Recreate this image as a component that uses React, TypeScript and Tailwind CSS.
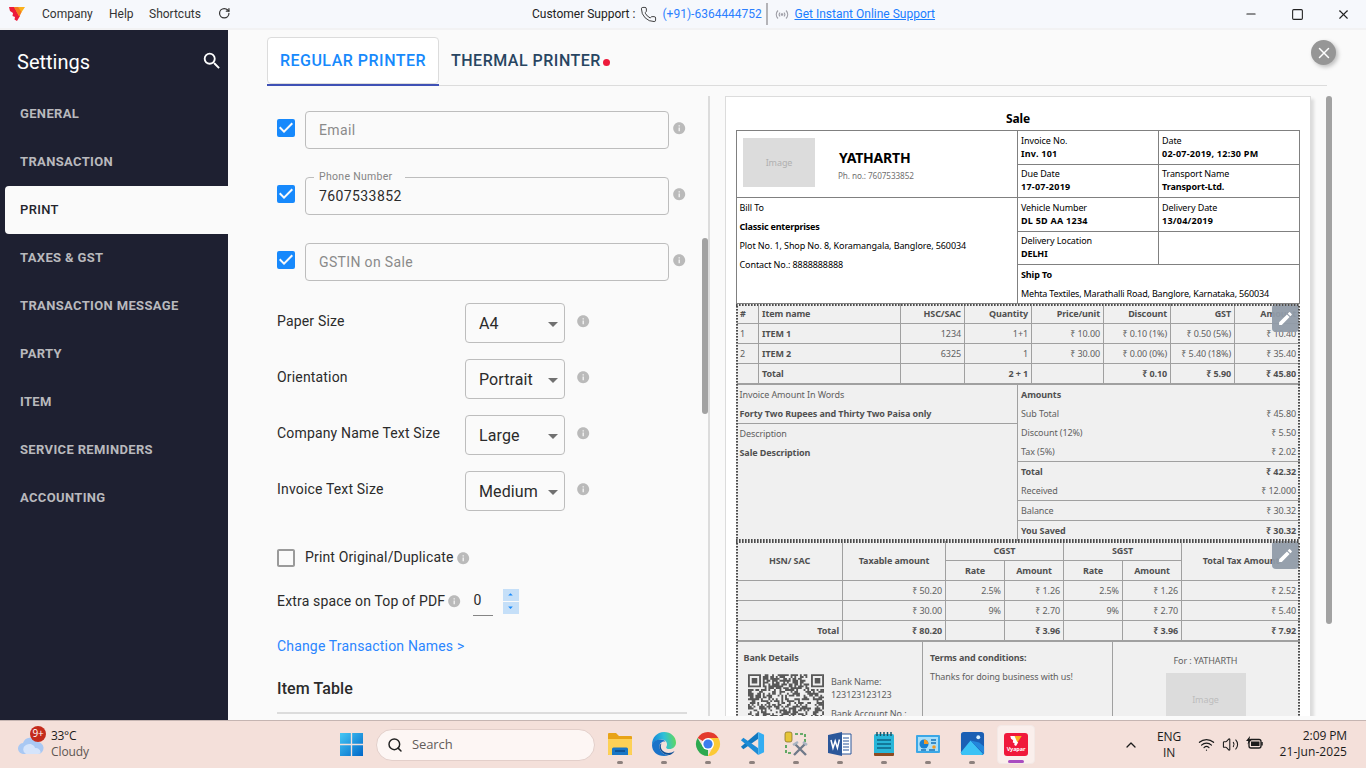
import React from "react";
import { MdInfo, MdSearch, MdEdit, MdCheckBox, MdCheckBoxOutlineBlank, MdArrowDropDown, MdArrowDropUp } from "react-icons/md";
import { RotateCw, Search, ChevronUp, X, Minus, Square, Phone, Volume2, Wifi } from "lucide-react";

const MENU = ["GENERAL", "TRANSACTION", "PRINT", "TAXES & GST", "TRANSACTION MESSAGE", "PARTY", "ITEM", "SERVICE REMINDERS", "ACCOUNTING"];

function VyaparMark({ className }: { className?: string }) {
  return (
    <svg viewBox="0 0 16 14" className={className}>
      <path d="M0 0h7l4 9-3 5-2.500-1.500L6 10 3.500 9 4 6 1 4z" fill="#ed1a3b" />
      <path d="M5 0h11l-6 9z" fill="#fbb01c" />
      <path d="M5 0h4l3.500 5-2 4.500z" fill="#f47b20" />
    </svg>
  );
}

function TitleBar() {
  return (
    <header className="flex h-[30px] shrink-0 items-center border-b-2 border-[#f2f2f3] bg-[#f6f8fc] text-[12px] text-[#333]">
      <VyaparMark className="ml-[9px] h-[14px] w-[16px]" />
      <span className="ml-[17px] w-[67px]">Company</span>
      <span className="w-[40px]">Help</span>
      <span className="w-[69px]">Shortcuts</span>
      <RotateCw size={12.500} strokeWidth={2.300} className="-mt-px" />
      <div className="ml-[301.500px] flex items-center">
        <span className="w-[108px] text-[#222]">Customer Support :</span>
        <Phone size={17} strokeWidth={1.300} className="mt-px" />
        <span className="ml-[5.500px] w-[104px] text-[#2b7fff]">(+91)-6364444752</span>
        <div className="-ml-[1px] h-[22px] w-[2px] bg-[#b4b4b8]" />
        <svg width="14" height="12" viewBox="0 0 14 12" fill="none" stroke="#a0a0a8" strokeWidth="1.100" className="ml-[7px]">
          <path d="M3 2.500a5.500 5.500 0 0 0 0 8M5 4.500a3 3 0 0 0 0 4M11 2.500a5.500 5.500 0 0 1 0 8M9 4.500a3 3 0 0 1 0 4" />
          <circle cx="7" cy="6.500" r="0.800" fill="#a0a0a8" />
        </svg>
        <span className="ml-[6px] text-[#1a7dff] underline">Get Instant Online Support</span>
      </div>
      <div className="ml-auto flex w-[122px] items-center text-[#222]">
        <Minus size={14} strokeWidth={2} />
        <Square size={13} strokeWidth={2} className="ml-[33px]" />
        <X size={15} strokeWidth={1.800} className="ml-[32px]" />
      </div>
    </header>
  );
}

function Sidebar() {
  return (
    <aside className="flex w-[228px] shrink-0 flex-col bg-[#1e2031]">
      <div className="flex h-[60px] items-center justify-between pl-[17px] pr-[5px] text-white">
        <span className="pt-[3px] text-[20px]">Settings</span>
        <MdSearch size={22} className="mt-[2px]" />
      </div>
      {MENU.map((m) =>
        m === "PRINT" ? (
          <div key={m} className="ml-[5px] flex h-12 items-center rounded-l-[4px] bg-[#fafafa] pl-[15px] text-[13px] font-medium tracking-[0.35px] text-[#24242c]">{m}</div>
        ) : (
          <div key={m} className="flex h-12 items-center pl-5 text-[13px] font-bold tracking-[0.35px] text-[#b9b9bd]">{m}</div>
        )
      )}
    </aside>
  );
}

const Info = ({ className = "" }: { className?: string }) => <MdInfo size={14.4} className={"shrink-0 text-[#bababa] " + className} />;

function Field({ label, value }: { label: string; value?: string }) {
  return (
    <div className="mb-7 flex h-[38px] items-center">
      <MdCheckBox size={24} className="-ml-[3px] -mt-[4px] text-[#1789fc]" />
      <div className="relative ml-[7px] flex h-[38px] w-[364px] items-center rounded-[4px] border border-[#bdbdbd] pl-[13px] text-[14px] tracking-[0.4px]">
        {value ? (
          <>
            <span className="absolute -top-[9px] left-[8px] w-[91px] bg-[#fafafa] pl-[5px] text-[10.500px] leading-[15px] tracking-[0.3px] text-[#858585]">{label}</span>
            <span className="text-[#2b2b2b]">{value}</span>
          </>
        ) : (
          <span className="tracking-[0.35px] text-[#8a8a8a]">{label}</span>
        )}
      </div>
      <Info className="-mt-[4px] ml-[3px]" />
    </div>
  );
}

function SelectRow({ label, value }: { label: string; value: string }) {
  return (
    <div className="mb-4 flex h-10 items-center">
      <span className="w-[188px] pb-[4px] tracking-[0.17px]">{label}</span>
      <div className="flex h-10 w-[100px] items-center justify-between rounded-[4px] border border-[#bdbdbd] pl-[13px] text-[16px]">
        <span className="pt-[2px] tracking-[0.1px]">{value}</span>
        <MdArrowDropDown size={24} className="-mr-px mt-px shrink-0 text-[#707070]" />
      </div>
      <Info className="-mt-[4px] ml-[11px]" />
    </div>
  );
}

function FormPane() {
  return (
    <div className="flex w-[443px] shrink-0 overflow-hidden border-r-2 border-[#dcdcdc] text-[14px] text-[#2b2b2b]">
      <div className="w-[435px] pl-[10px] pt-[15px]">
        <Field label="Email" />
        <Field label="Phone Number" value="7607533852" />
        <Field label="GSTIN on Sale" />
        <div className="-mt-[6px]">
          <SelectRow label="Paper Size" value="A4" />
          <SelectRow label="Orientation" value="Portrait" />
          <SelectRow label="Company Name Text Size" value="Large" />
          <SelectRow label="Invoice Text Size" value="Medium" />
        </div>
        <div className="mt-[35px] flex h-6 items-center">
          <MdCheckBoxOutlineBlank size={24} className="-ml-[3px] text-[#9a9a9a]" />
          <span className="ml-[7px] pb-[2px] tracking-[0.15px]">Print Original/Duplicate</span>
          <Info className="ml-[3px]" />
        </div>
        <div className="mt-[16px] flex h-[30px] items-center">
          <span className="tracking-[0.17px]">Extra space on Top of PDF</span>
          <Info className="ml-[2px]" />
          <span className="ml-[11px] h-[30px] w-5 border-b border-[#858585] pl-px pt-[4px]">0</span>
          <div className="ml-[10px] flex flex-col gap-px text-[#1789fc]">
            <div className="flex h-3 w-4 items-center justify-center bg-[#c5dff8]"><MdArrowDropUp size={11} /></div>
            <div className="flex h-3 w-4 items-center justify-center bg-[#c5dff8]"><MdArrowDropDown size={11} /></div>
          </div>
        </div>
        <div className="mt-[20px] leading-5 tracking-[0.17px] text-[#2b86ff]">Change Transaction Names &gt;</div>
        <div className="mt-[21px] w-[410px] border-b-2 border-[#dcdcdc] pb-[11px] text-[16px] font-medium leading-6 tracking-[0.1px]">Item Table</div>
      </div>
      <div className="mt-[142px] h-[176px] w-[6px] rounded-[3px] bg-[#a2a2a2]" />
    </div>
  );
}

function Detail({ label, value, className = "" }: { label: string; value: string; className?: string }) {
  const numeric = /\d{3}/.test(value);
  return (
    <div className={"flex flex-col justify-center border-b border-[#808080] pb-[2px] pl-[3px] leading-[13px] " + className}>
      <span>{label}</span>
      <b className={numeric ? "tracking-[0.25px]" : ""}>{value}</b>
    </div>
  );
}

function InvoiceHead() {
  return (
    <div className="flex h-[174px] border-x border-t border-[#808080]">
      <div className="flex w-[281px] flex-col border-r border-[#808080]">
        <div className="flex h-[67px] border-b border-[#808080] pl-[6px] pt-[7px]">
          <div className="flex h-[49px] w-[72px] items-center justify-center bg-[#dcdcdc] text-[#b0b0b0]">Image</div>
          <div className="ml-[23px] pt-[10px]">
            <div className="pl-px text-[14px] font-bold leading-5 tracking-[-0.2px]">YATHARTH</div>
            <div className="text-[8.200px] leading-4 text-[#707070]">Ph. no.: 7607533852</div>
          </div>
        </div>
        <div className="h-[106px] border-b border-[#808080] pl-[2.500px] leading-[19px]">
          <div>Bill To</div>
          <div className="font-bold tracking-[-0.2px]">Classic enterprises</div>
          <div>Plot No. 1, Shop No. 8, Koramangala, Banglore, 560034</div>
          <div>Contact No.: 8888888888</div>
        </div>
      </div>
      <div className="flex-1">
        <div className="grid grid-cols-[141px_140px] grid-rows-[34px_33px_34px_33px]">
          <Detail label="Invoice No." value="Inv. 101" className="border-r" />
          <Detail label="Date" value="02-07-2019, 12:30 PM" />
          <Detail label="Due Date" value="17-07-2019" className="border-r" />
          <Detail label="Transport Name" value="Transport-Ltd." />
          <Detail label="Vehicle Number" value="DL 5D AA 1234" className="border-r" />
          <Detail label="Delivery Date" value="13/04/2019" />
          <Detail label="Delivery Location" value="DELHI" className="border-r" />
          <Detail label="" value="" />
        </div>
        <div className="h-[39px] border-b border-[#808080] pl-[3px] leading-[19px]">
          <b>Ship To</b>
          <div className="tracking-[-0.18px]">Mehta Textiles, Marathalli Road, Banglore, Karnataka, 560034</div>
        </div>
      </div>
    </div>
  );
}

const ITEMS = [
  ["#", "Item name", "HSC/SAC", "Quantity", "Price/unit", "Discount", "GST", "Amount"],
  ["1", "ITEM 1", "1234", "1+1", "₹ 10.00", "₹ 0.10 (1%)", "₹ 0.50 (5%)", "₹ 10.40"],
  ["2", "ITEM 2", "6325", "1", "₹ 30.00", "₹ 0.00 (0%)", "₹ 5.40 (18%)", "₹ 35.40"],
  ["", "Total", "", "2 + 1", "", "₹ 0.10", "₹ 5.90", "₹ 45.80"],
];

function Grid({ rows, cols, left, boldRows, boldCol }: { rows: string[][]; cols: string; left: number; boldRows: number[]; boldCol?: number }) {
  return (
    <>
      {rows.map((r, i) => (
        <div key={i} className={"grid h-5 border-b border-[#a0a0a0] leading-[19px] " + cols}>
          {r.map((c, j) => (
            <div
              key={j}
              className={
                "whitespace-nowrap " +
                (j < r.length - 1 ? "border-r border-[#a0a0a0] " : "") +
                (j < left ? "pl-[3px] " : j < r.length - 1 ? "pr-[3px] text-right " : "pr-[4px] text-right ") +
                (boldRows.includes(i) || boldCol === j ? "font-bold text-[#505050]" : "text-[#606060]")
              }
            >
              {c}
            </div>
          ))}
        </div>
      ))}
    </>
  );
}

function DottedFrame() {
  return (
    <div className="pointer-events-none absolute inset-0 flex flex-col justify-between">
      <div className="h-[2px] bg-[repeating-linear-gradient(90deg,#4c4c4c_0_1px,#8a8a8a_1px_2px,transparent_2px_3px)]" />
      <div className="flex flex-1 justify-between">
        <div className="w-[2px] bg-[repeating-linear-gradient(180deg,#4c4c4c_0_1px,#8a8a8a_1px_2px,transparent_2px_3px)]" />
        <div className="w-[2px] bg-[repeating-linear-gradient(180deg,#4c4c4c_0_1px,#8a8a8a_1px_2px,transparent_2px_3px)]" />
      </div>
      <div className="h-[2px] bg-[repeating-linear-gradient(90deg,#4c4c4c_0_1px,#8a8a8a_1px_2px,transparent_2px_3px)]" />
    </div>
  );
}

function Editable({ children, className = "" }: { children: React.ReactNode; className?: string }) {
  return (
    <section className={"relative bg-[#f0f0f0] " + className}>
      {children}
      <div className="absolute right-px top-0 flex h-7 w-[27px] items-center justify-center rounded-[4px] bg-[#909ba8]/95 text-white">
        <MdEdit size={17} />
      </div>
      <DottedFrame />
    </section>
  );
}

const Line = ({ l, v, className = "" }: { l: string; v?: string; className?: string }) => (
  <div className={"flex justify-between pl-[3px] pr-[4px] " + className}>
    <span>{l}</span>
    <span>{v}</span>
  </div>
);

function ItemSection() {
  return (
    <Editable className="flex h-[237px] flex-col pl-px">
      <Grid rows={ITEMS} cols="grid-cols-[22px_142px_64px_67px_72px_67px_64px_65px]" left={2} boldRows={[0, 3]} boldCol={1} />
      <div className="flex flex-1 border-t border-[#a0a0a0] text-[#606060]">
        <div className="w-[281px] border-r border-[#a0a0a0] leading-[19px]">
          <div className="h-[39px] border-b border-[#a0a0a0] pl-[2.500px]">
            <div>Invoice Amount In Words</div>
            <div className="font-bold text-[#505050]">Forty Two Rupees and Thirty Two Paisa only</div>
          </div>
          <div className="pl-[2.500px]">Description</div>
          <div className="pl-[2.500px] font-bold text-[#505050]">Sale Description</div>
        </div>
        <div className="flex-1 leading-[19px]">
          <Line l="Amounts" className="font-bold text-[#505050]" />
          <Line l="Sub Total" v="₹ 45.80" />
          <Line l="Discount (12%)" v="₹ 5.50" />
          <Line l="Tax (5%)" v="₹ 2.02" className="h-5 border-b border-[#a0a0a0]" />
          <Line l="Total" v="₹ 42.32" className="font-bold text-[#505050]" />
          <Line l="Received" v="₹ 12.000" className="h-5 border-b border-[#a0a0a0]" />
          <Line l="Balance" v="₹ 30.32" className="h-5 border-b border-[#a0a0a0]" />
          <Line l="You Saved" v="₹ 30.32" className="font-bold text-[#505050]" />
        </div>
      </div>
    </Editable>
  );
}

const TAXES = [
  ["", "₹ 50.20", "2.5%", "₹ 1.26", "2.5%", "₹ 1.26", "₹ 2.52"],
  ["", "₹ 30.00", "9%", "₹ 2.70", "9%", "₹ 2.70", "₹ 5.40"],
  ["Total", "₹ 80.20", "", "₹ 3.96", "", "₹ 3.96", "₹ 7.92"],
];

function QrCode() {
  const n = 41;
  const cells: string[] = [];
  let seed = 7;
  const finder = (x: number, y: number) => {
    const ring = Math.max(Math.abs(x - 3), Math.abs(y - 3));
    return ring === 3 || ring <= 1;
  };
  for (let y = 0; y < 24; y++) {
    for (let x = 0; x < n; x++) {
      seed = (seed * 1103515245 + 12345) % 2147483648;
      let on = (seed >> 12) % 100 < 54;
      if (y < 8 && x < 8) on = x < 7 && y < 7 && finder(x, y);
      if (y < 8 && x > n - 9) on = x > n - 8 && y < 7 && finder(x - n + 7, y);
      if (on) cells.push(`M${x} ${y}h1v1h-1z`);
    }
  }
  return (
    <svg viewBox="0 0 41 24" className="h-[45px] w-[76px] shrink-0">
      <path d={cells.join("")} fill="#585858" />
    </svg>
  );
}

function TaxHead({ name }: { name: string }) {
  return (
    <div className="w-[118px] border-r border-[#a0a0a0] text-center leading-[19px]">
      <div className="h-5 border-b border-[#a0a0a0]">{name}</div>
      <div className="flex h-[19px]">
        <div className="w-[59px] border-r border-[#a0a0a0]">Rate</div>
        <div className="flex-1">Amount</div>
      </div>
    </div>
  );
}

function TaxSection() {
  return (
    <Editable className="h-[200px] pl-px">
      <div className="flex h-10 border-b border-[#a0a0a0] font-bold text-[#505050]">
        <div className="flex w-[106px] items-center justify-center border-r border-[#a0a0a0]">HSN/ SAC</div>
        <div className="flex w-[103px] items-center justify-center border-r border-[#a0a0a0]">Taxable amount</div>
        <TaxHead name="CGST" />
        <TaxHead name="SGST" />
        <div className="flex flex-1 items-center justify-center">Total Tax Amount</div>
      </div>
      <Grid rows={TAXES} cols="grid-cols-[106px_103px_59px_59px_59px_59px_118px]" left={0} boldRows={[2]} />
      <div className="flex h-[100px] border-t border-[#a0a0a0] text-[#606060]">
        <div className="w-[186px] border-r border-[#a0a0a0] pl-[6.500px] pt-[6px]">
          <div className="font-bold leading-[19px] text-[#505050]">Bank Details</div>
          <div className="flex pl-[4px] pt-[7px]">
            <QrCode />
            <div className="ml-[7.500px] pt-px leading-[13px]">
              Bank Name:<br />123123123123
              <div className="mt-[6px]">Bank Account No.:</div>
            </div>
          </div>
        </div>
        <div className="w-[190px] border-r border-[#a0a0a0] pl-[7px] pt-[6px] leading-[19px]">
          <div className="font-bold text-[#505050]">Terms and conditions:</div>
          <div>Thanks for doing business with us!</div>
        </div>
        <div className="flex flex-1 flex-col items-center pr-[2px] pt-[9px] leading-[19px]">
          For : YATHARTH
          <div className="mt-[3px] flex h-[53px] w-20 items-center justify-center bg-[#dcdcdc] text-[#bcbcbc]">Image</div>
        </div>
      </div>
    </Editable>
  );
}

function PreviewPane() {
  return (
    <div className="flex h-full overflow-hidden pl-[15px]">
      <div className="h-[700px] w-[586px] border border-[#dcdcdc] bg-white px-[10px] font-['Noto_Sans','Open_Sans',sans-serif] text-[9px] tracking-[-0.1px] text-black shadow-[3px_3px_3px_rgba(0,0,0,0.12)]">
        <div className="h-[33px] pt-[12px] text-center text-[12px] font-bold leading-[20px]">Sale</div>
        <InvoiceHead />
        <ItemSection />
        <TaxSection />
      </div>
      <div className="ml-[15px] h-[528px] w-[6px] rounded-[3px] bg-[#a2a2a2]" />
    </div>
  );
}

function Main() {
  return (
    <main className="flex flex-1 flex-col bg-[#fafafa] pl-[39px] pt-[7px]">
      <div className="flex h-[49px]">
        <div className="w-[172px] border-b-2 border-[#3f51b5]">
          <div className="flex h-[47px] items-center justify-center rounded-[4px] border border-[#dcdcdc] bg-white text-[16px] font-medium tracking-[0.5px] text-[#1789fc]">REGULAR PRINTER</div>
        </div>
        <div className="flex w-[888px] items-center border-b border-[#dcdcdc] pl-[12px] text-[16px] font-medium tracking-[0.5px] text-[#284561]">
          THERMAL PRINTER
          <span className="ml-[2px] mt-[2px] h-[7px] w-[7px] rounded-full bg-[#ed1a3b]" />
        </div>
        <div className="-ml-[16px] mt-[3px] flex h-[25px] w-[25px] items-center justify-center rounded-full bg-[#969696] text-white shadow-[2px_2px_4px_rgba(0,0,0,0.25)]">
          <X size={18} strokeWidth={2} />
        </div>
      </div>
      <div className="mt-[10px] flex h-[620px]">
        <FormPane />
        <PreviewPane />
      </div>
    </main>
  );
}

const APPS: React.ReactNode[] = [
  <svg viewBox="0 0 26 26" className="size-[26px]"><path d="M1 3q0-1 1-1h7l3 3h12q1 0 1 1v17q0 1-1 1H2q-1 0-1-1z" fill="#e8a317" /><path d="M1 8h24v15q0 1-1 1H2q-1 0-1-1z" fill="#fdd156" /><path d="M5 24v-6q0-1.500 1.500-1.500h13q1.500 0 1.500 1.500v6z" fill="#1976c5" /><path d="M8 20h10" stroke="#0c4b8a" strokeWidth="1.500" /></svg>,
  <svg viewBox="0 0 26 26" className="size-[26px]">
    <defs>
      <linearGradient id="edgeTop" x1="0" x2="1" y1="0.300" y2="0.200"><stop offset="0" stopColor="#1486d8" /><stop offset="0.500" stopColor="#2fc0d8" /><stop offset="1" stopColor="#62d957" /></linearGradient>
    </defs>
    <path d="M1 14C1 6.500 6 1 13 1s12 5 12 10.500c0 4-3 6.500-6.500 6.500-3 0-4-1.200-3-2.600 1.600-2.400-.2-6.900-5-6.900C5.500 8.500 2 11 1 14z" fill="url(#edgeTop)" />
    <path d="M1 14c.7-3.300 4-5.500 8.500-5.500 2.200 0 4 .9 5 2.300-3.500-1-6 1.700-6 4.700 0 5 4.500 8.500 9.500 8.500-1.500.7-3.200 1-5 1C6 25 1 20.500 1 14z" fill="#1a73c9" />
    <path d="M10.500 12.500c-2.500 5 2 9.500 7 9.500 2.500 0 4.500-1 6-2-1 2-3 3.500-5 4-5 0-10-3.500-10-8.500 0-1.200.8-2.400 2-3z" fill="#0e4f96" />
  </svg>,
  <svg viewBox="0 0 26 26" className="size-[26px]"><path d="M13 13L2.600 7A12 12 0 0 1 23.400 7H13z" fill="#e33b2e" /><path d="M13 13L13 25A12 12 0 0 1 2.600 7L8 16z" fill="#2da94f" /><path d="M13 25A12 12 0 0 0 23.400 7H13l5 9z" fill="#fcc934" /><circle cx="13" cy="13" r="6" fill="#fff" /><circle cx="13" cy="13" r="4.600" fill="#3b7ded" /></svg>,
  <svg viewBox="0 0 26 26" className="size-[25px]"><path d="M19 1L1 16.500l2.500 2.500L19 8z" fill="#1178c0" /><path d="M19 25L1 9.500 3.500 7 19 18z" fill="#1b8bd6" /><path d="M19 1l6 3v18l-6 3z" fill="#33adf2" /></svg>,
  <svg viewBox="0 0 26 26" className="size-[26px]"><rect x="2" y="1" width="7" height="10" rx="2" fill="#e6c53a" stroke="#7c6a1c" strokeWidth=".7" /><path d="M12 3h10v9M3 14v8h6" fill="none" stroke="#3d9b48" strokeWidth="1.600" strokeDasharray="3 2" /><path d="M12 13l11 11M22 13L11 24" stroke="#6f7a8a" strokeWidth="2.400" /><path d="M20 11l4 3M10 14l5-3" stroke="#aab4c2" strokeWidth="2.500" /></svg>,
  <svg viewBox="0 0 26 26" className="size-[26px]"><path d="M14 3h10v20H14z" fill="#fff" stroke="#2b579a" /><path d="M16 7h6M16 10h6M16 13h6M16 16h6M16 19h6" stroke="#2b579a" strokeWidth="1.200" /><path d="M1 4l14-3v24L1 22z" fill="#2b579a" /><path d="M4 9l2 8 2.200-7 2.200 7 2-8.500" fill="none" stroke="#fff" strokeWidth="1.500" /></svg>,
  <svg viewBox="0 0 26 26" className="size-[26px]"><rect x="3" y="3" width="20" height="21" rx="1.500" fill="#29b6d8" /><path d="M3 22h20v2q0 1-1 1H4q-1 0-1-1z" fill="#8d4b22" /><path d="M6 9h14M6 13h14M6 17h14" stroke="#0c6485" strokeWidth="1.500" /><path d="M6 1v4M9.500 1v4M13 1v4M16.500 1v4M20 1v4" stroke="#1a5468" strokeWidth="1.500" /></svg>,
  <svg viewBox="0 0 26 26" className="size-[26px]"><rect x="1" y="4" width="24" height="18" rx="1" fill="#3ba7e6" /><rect x="3" y="6" width="20" height="14" fill="#a9dff9" /><circle cx="9" cy="13" r="4.500" fill="#1a80cf" /><path d="M9 13V8.500a4.500 4.500 0 0 1 4.500 4.500z" fill="#f59a23" /><path d="M16 9h5M16 12h5M6 19h5M14 19h6" stroke="#1673b8" strokeWidth="1.600" /><circle cx="19" cy="16" r="1.800" fill="#f59a23" /></svg>,
  <svg viewBox="0 0 26 26" className="size-[25px]"><rect x="1" y="1" width="24" height="24" rx="3" fill="#1b5fb4" /><path d="M1 22L11 10l13 14q-.5 1-2 1H4q-3 0-3-3z" fill="#3bc2f5" /><path d="M11 10l14 14V16l-5-4z" fill="#2387dc" /><circle cx="19" cy="6.500" r="2" fill="#d8f0ff" /></svg>,
];

function Taskbar() {
  return (
    <footer className="flex h-12 shrink-0 items-center border-t border-[#c5b5b2] bg-[#f4e0da] font-['Open_Sans','Noto_Sans',sans-serif] text-[12px] tracking-[-0.1px] text-[#1b1b1b]">
      <div className="relative ml-[18px] h-[38px] w-[33px]">
        <svg viewBox="0 0 26 18" className="absolute left-0 top-[10px] h-[18px] w-[26px]"><path d="M6 18a5.500 5.500 0 0 1-1-11A7.500 7.500 0 0 1 19 6a6 6 0 0 1 1 12z" fill="#a9c8f3" /><path d="M8 18a5 5 0 0 1 0-9c5-3 9 1 9 3 5-1 8 6 3 6z" fill="#d5e4fb" /></svg>
        <span className="absolute left-[12px] top-0 flex h-4 w-4 items-center justify-center rounded-full bg-[#c42b1c] text-[10px] text-white">9+</span>
      </div>
      <div className="w-[289px] pb-px leading-4"><div className="tracking-[-0.3px]">33°C</div><div className="text-[#5c5652]">Cloudy</div></div>
      <svg viewBox="0 0 24 24" className="size-[23px]"><defs><linearGradient id="wg" x1="0" y1="0" x2="1" y2="1"><stop offset="0" stopColor="#45c8f5" /><stop offset="1" stopColor="#0067c8" /></linearGradient></defs><path d="M0 0h11.300v11.300H0zM12.700 0H24v11.300H12.700zM0 12.700h11.300V24H0zM12.700 12.700H24V24H12.700z" fill="url(#wg)" /></svg>
      <div className="ml-[13px] flex h-8 w-[219px] items-center rounded-full border border-[#e3cfca] bg-[#fdf6f4] pl-[10px] text-[13px] text-[#625c5a]">
        <Search size={16} strokeWidth={2.200} className="text-[#222]" />
        <span className="ml-[9px]">Search</span>
      </div>
      <div className="ml-[3px] flex">
        {APPS.map((a, i) => (
          <div key={i} className="flex h-12 w-11 flex-col items-center justify-between pt-[10px] pb-[5px]">
            <div className="flex h-[26px] items-center">{a}</div>
            <span className="h-[3px] w-[6px] rounded-full bg-[#8d817e]" />
          </div>
        ))}
        <div className="ml-[3px] mt-[4px] flex h-[39px] w-[38px] flex-col items-center justify-between rounded-[4px] border border-[#f3e9e6] bg-[#faefec] pt-[7px]">
          <div className="flex h-[23px] w-6 flex-col items-center rounded-[3px] bg-[#f0193b] pt-[3px]">
            <svg viewBox="0 0 16 14" className="h-[10px] w-3"><path d="M0 0h7l4 9-3 5-2.500-1.500L6 10 3.500 9 4 6 1 4z" fill="#fff" /><path d="M6 0h10l-6 9z" fill="#fbb01c" /></svg>
            <span className="text-[5.500px] font-bold leading-[7px] text-white">Vyapar</span>
          </div>
          <span className="h-[3px] w-4 rounded-full bg-[#a94cc0]" />
        </div>
      </div>
      <ChevronUp size={16} strokeWidth={1.900} className="ml-[88px]" />
      <div className="ml-[13px] w-[34px] text-center leading-4">ENG<br />IN</div>
      <Wifi size={17} strokeWidth={1.700} className="ml-[12px]" />
      <Volume2 size={17} strokeWidth={1.500} className="ml-[7px]" />
      <svg viewBox="0 0 18 14" className="ml-[7px] mb-[3px] h-[14px] w-[18px]"><rect x="3" y="3.500" width="12" height="8.500" rx="2" fill="none" stroke="#1b1b1b" strokeWidth="1.300" /><rect x="5" y="5.500" width="8.500" height="4.500" fill="#1b1b1b" /><path d="M16 6v3.500" stroke="#1b1b1b" strokeWidth="1.500" /><path d="M4 0L0 5h2.500L1.500 8.500 6 3.500H3.500z" fill="#1b1b1b" /></svg>
      <div className="ml-auto mr-[19px] pb-px text-right leading-4">2:09 PM<br /><span className="tracking-[0.05px]">21-Jun-2025</span></div>
    </footer>
  );
}

export default function App() {
  return (
    <div className="flex h-[768px] w-[1366px] flex-col overflow-hidden bg-[#fafafa] font-['Roboto',sans-serif]">
      <TitleBar />
      <div className="flex h-[690px] shrink-0">
        <Sidebar />
        <Main />
      </div>
      <Taskbar />
    </div>
  );
}
